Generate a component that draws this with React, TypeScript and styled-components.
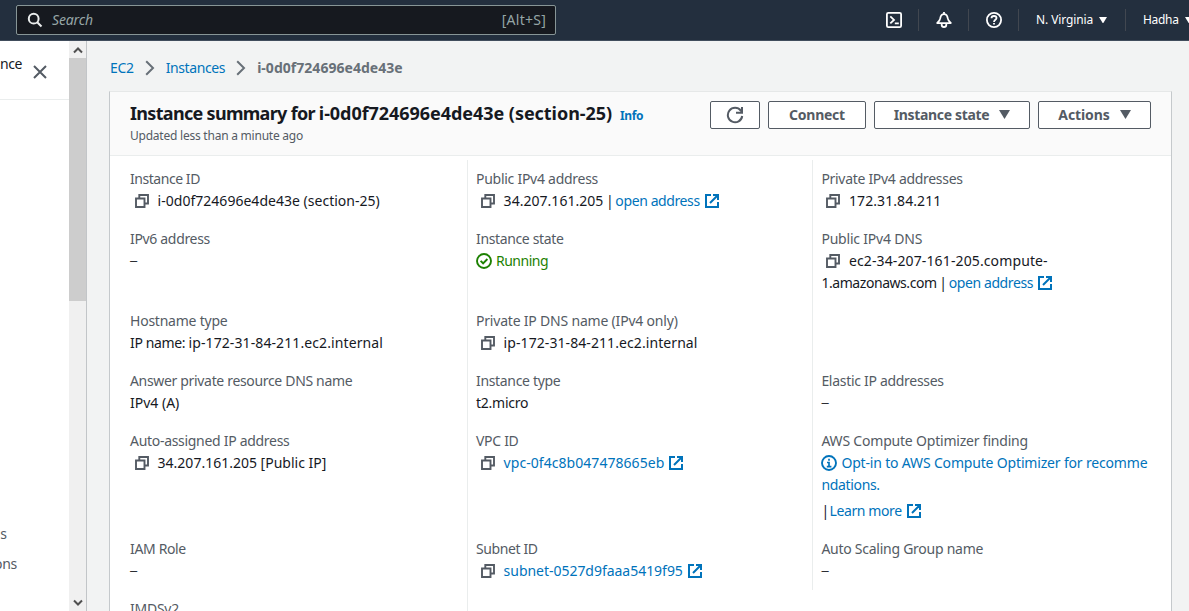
import React from 'react';
import styled, { createGlobalStyle, css } from 'styled-components';

const color = {
  nav: '#232f3e',
  page: '#f2f3f3',
  text: '#16191f',
  label: '#545b64',
  link: '#0073bb',
  green: '#1d8102',
  line: '#eaeded',
};

const GlobalStyle = createGlobalStyle`
  * { box-sizing: border-box; }
  body {
    margin: 0;
    overflow: hidden;
    background: ${color.page};
    color: ${color.text};
    font: 14px/22px "Noto Sans", "Open Sans", sans-serif;
  }
  button { font: inherit; }
`;

const Page = styled.div`
  display: flex;
  flex-direction: column;
  width: 100vw;
  height: 100vh;
  overflow: hidden;
`;

/* Text run with its own tracking */
const Text = styled.span<{ $ls?: number }>`
  letter-spacing: ${(p) => p.$ls ?? 0}px;
  white-space: pre;
`;

/* ---- Top navigation ---- */
const TopNav = styled.header`
  display: flex;
  flex: none;
  height: 41px;
  padding-left: 16px;
  background: ${color.nav};
  border-bottom: 1px solid #414d5c;
`;

const SearchBox = styled.div`
  display: flex;
  flex: none;
  align-items: center;
  width: 540px;
  height: 30px;
  margin-top: 5px;
  padding: 0 9px 0 10px;
  border: 1px solid #879596;
  border-radius: 2px;
  background: #16191f;
  color: #95a5a6;
`;

const SearchHint = styled(Text)`
  flex: 1;
  margin-left: 9px;
  font-style: italic;
`;

const NavGroup = styled.div`
  display: flex;
  flex: none;
  margin-left: 313px;
  padding-top: 9px;
`;

const NavIcon = styled.div`
  display: flex;
  flex: none;
  align-items: center;
  justify-content: center;
  width: 50px;
  height: 22px;
  color: #fff;
  border-right: 1px solid #414750;
`;

const NavMenu = styled.div<{ $width: number; $divider?: boolean }>`
  display: flex;
  flex: none;
  align-items: center;
  gap: 6px;
  width: ${(p) => p.$width}px;
  height: 22px;
  padding-left: 17px;
  color: #fff;
  font-size: 12px;
  ${(p) => p.$divider && css`border-right: 1px solid #414750;`}
`;

/* ---- Body and side panel ---- */
const Body = styled.div`
  display: flex;
  flex: 1;
  min-height: 0;
`;

const Sidebar = styled.aside`
  display: flex;
  flex-direction: column;
  flex: none;
  width: 69px;
  background: #fff;
`;

const SidebarHead = styled.div`
  display: flex;
  flex: none;
  height: 59px;
  padding-top: 12px;
  border-bottom: 1px solid ${color.line};
`;

const SidebarTitle = styled(Text)`
  display: flex;
  justify-content: flex-end;
  width: 22px;
`;

const CloseIcon = styled.svg`
  margin: 12px 0 0 11px;
`;

const SidebarLinks = styled.nav`
  display: flex;
  flex-direction: column;
  gap: 8px;
  margin-top: 423px;
  color: ${color.label};
`;

const SidebarLink = styled(Text)<{ $width: number }>`
  display: flex;
  justify-content: flex-end;
  width: ${(p) => p.$width}px;
`;

const Scrollbar = styled.div`
  display: flex;
  flex-direction: column;
  flex: none;
  width: 18px;
  background: #f0f0f0;
  border-right: 1px solid #c2c5c8;
`;

const ScrollArrow = styled.div`
  display: flex;
  flex: none;
  align-items: center;
  justify-content: center;
  height: 17px;
`;

const ScrollTrack = styled.div`
  flex: 1;
`;

const ScrollThumb = styled.div`
  height: 243px;
  background: #cdcdcd;
`;

/* ---- Main content ---- */
const Main = styled.main`
  display: flex;
  flex-direction: column;
  flex: 1;
  min-width: 0;
  padding: 16px 17px 0 22px;
`;

const Breadcrumbs = styled.nav`
  display: flex;
  align-items: center;
  flex: none;
  height: 22px;
  padding-left: 1px;
  color: ${color.link};
`;

const Chevron = styled.svg`
  margin: 0 11px;
`;

const Current = styled(Text)`
  color: #687078;
  font-weight: 700;
`;

const Card = styled.section`
  flex: 1;
  min-height: 0;
  margin-top: 12px;
  border: 1px solid #c5c9cc;
  border-top-color: #e6e8e8;
  border-bottom: 0;
  background: #fff;
  overflow: hidden;
`;

const CardHead = styled.div`
  display: flex;
  justify-content: space-between;
  height: 64px;
  padding: 9px 20px 0;
  background: #fafafa;
  border-bottom: 1px solid ${color.line};
`;

const TitleRow = styled.div`
  display: flex;
  align-items: baseline;
  gap: 8px;
  height: 24px;
`;

const Title = styled.h1`
  margin: 0;
  font-size: 18px;
  line-height: 24px;
  font-weight: 700;
`;

const Info = styled(Text)`
  color: ${color.link};
  font-size: 12px;
  font-weight: 700;
`;

const Updated = styled.div`
  color: ${color.label};
  font-size: 12px;
  line-height: 22px;
`;

const Buttons = styled.div`
  display: flex;
  gap: 8px;
`;

const Button = styled.button<{ $width: number }>`
  display: flex;
  align-items: center;
  justify-content: center;
  gap: 10px;
  width: ${(p) => p.$width}px;
  height: 28px;
  padding: 0;
  border: 1px solid ${color.label};
  border-radius: 2px;
  background: #fff;
  color: ${color.label};
  font-weight: 700;
`;

const Columns = styled.div`
  display: grid;
  grid-template-columns: 357px 345px 1fr;
  align-items: start;
  padding-top: 4px;
`;

const Column = styled.div<{ $first?: boolean; $pad?: number }>`
  padding: 8px 0 8px ${(p) => (p.$first ? 20 : p.$pad ?? 8)}px;
  ${(p) => !p.$first && css`border-left: 1px solid ${color.line};`}
`;

const Field = styled.div<{ $height: number }>`
  height: ${(p) => p.$height}px;
`;

const Label = styled.div<{ $ls?: number }>`
  color: ${color.label};
  letter-spacing: ${(p) => p.$ls ?? 0}px;
`;

const Line = styled.div<{ $gap?: boolean }>`
  display: flex;
  align-items: center;
  height: 22px;
  white-space: pre;
  ${(p) => p.$gap && css`margin-top: 4px;`}
`;

const Link = styled(Text)`
  color: ${color.link};
`;

const Status = styled(Text)`
  margin-left: 4px;
  color: ${color.green};
`;

const Spaced = styled(Link)`
  margin-left: 4px;
`;

/* Placeholder for an empty value */
const Dash = styled.span`
  font-family: "Liberation Sans", sans-serif;
  font-size: 13px;
`;

const CopySvg = styled.svg`
  flex: none;
  margin: 0 7.600px 0 4px;
`;

const ExternalSvg = styled.svg`
  flex: none;
  margin-left: 4px;
`;

const Copy = () => (
  <CopySvg width="16" height="16" viewBox="0 0 16 16" fill="none" stroke={color.label} strokeWidth="1.900">
    <path d="M2 5.500h8.500V14H2z" />
    <path d="M5.300 5.500V2H14v8.500h-3.500" />
  </CopySvg>
);

const External = () => (
  <ExternalSvg width="16" height="16" viewBox="0 0 16 16" fill="none" stroke={color.link} strokeWidth="2">
    <path d="M7 2H2v12h12V9" />
    <path d="M9 2h5v5M14 2L6 10" />
  </ExternalSvg>
);

const Caret = ({ size }: { size: number }) => (
  <svg width={size} height={size * 0.82} viewBox="0 0 10 8" fill="currentColor" preserveAspectRatio="none">
    <path d="M0 0h10L5 8z" />
  </svg>
);

const TerminalIcon = () => (
  <svg width="16" height="16" viewBox="0 0 16 16" fill="none" stroke="currentColor" strokeWidth="1.800">
    <rect x=".9" y=".9" width="14.200" height="14.200" rx="1.400" />
    <path d="M4.300 4.400L8 7.900l-3.700 3.500M8.800 11.300h4" />
  </svg>
);

const BellIcon = () => (
  <svg width="16" height="16" viewBox="0 0 16 16" fill="none" stroke="currentColor" strokeWidth="1.800" strokeLinejoin="round">
    <path d="M8 0v2M1.200 11.100C3.200 9.700 3.900 8.400 4.300 6.200 4.700 3.500 5.900 2.200 8 2.200s3.300 1.300 3.700 4c.4 2.200 1.100 3.500 3.100 4.900z" />
    <path d="M5.700 11.500v1.200c0 1.300 1 2.300 2.300 2.300s2.300-1 2.300-2.300v-1.200" />
  </svg>
);

const HelpIcon = () => (
  <svg width="16" height="16" viewBox="0 0 16 16" fill="none" stroke="currentColor" strokeWidth="1.800">
    <circle cx="8" cy="8" r="7.100" />
    <path d="M5.500 6.200C5.500 4.800 6.500 4 8 4s2.500.9 2.500 2.100C10.500 7.700 8 7.900 8 9.900M8 10.900v1.600" />
  </svg>
);

const SearchIcon = () => (
  <svg width="16" height="16" viewBox="0 0 16 16" fill="none" stroke="#eaeded" strokeWidth="2">
    <circle cx="6.700" cy="6.700" r="4.900" />
    <path d="M10.200 10.200l4.300 4.300" />
  </svg>
);

const RefreshIcon = () => (
  <svg width="18" height="18" viewBox="0 0 18 18" fill="none" stroke="currentColor" strokeWidth="2">
    <path d="M16.200 10A7.200 7.200 0 1 1 14.800 4.700L16 6" />
    <path d="M16 1v5.800h-6" />
  </svg>
);

const ArrowIcon = ({ down }: { down?: boolean }) => (
  <svg width="10" height="8" viewBox="0 0 10 8" fill="none" stroke="#505050" strokeWidth="2">
    <path d={down ? 'M1 1.500l4 4 4-4' : 'M1 6.500l4-4 4 4'} />
  </svg>
);

const Separator = () => (
  <Chevron width="10" height="16" viewBox="0 0 10 16" fill="none" stroke="#687078" strokeWidth="2">
    <path d="M1.200 1.200L8 8l-6.800 6.800" />
  </Chevron>
);

const CheckIcon = () => (
  <svg width="16" height="16" viewBox="0 0 16 16" fill="none" stroke={color.green} strokeWidth="1.900">
    <circle cx="8" cy="8" r="7" />
    <path d="M4.600 7.900l2.500 2.400 4.300-4.300" />
  </svg>
);

const InfoIcon = () => (
  <svg width="16" height="16" viewBox="0 0 16 16" fill="none" stroke={color.link} strokeWidth="1.900">
    <circle cx="8" cy="8" r="7" />
    <path d="M8 3.800v1.900M6 7.500h2v4M5.800 11.600h4.600" strokeWidth="1.700" />
  </svg>
);

export default function App() {
  return (
    <Page>
      <GlobalStyle />
      <TopNav>
        <SearchBox>
          <SearchIcon />
          <SearchHint $ls={-0.15}>Search</SearchHint>
          <Text $ls={0.25}>[Alt+S]</Text>
        </SearchBox>
        <NavGroup>
          <NavIcon><TerminalIcon /></NavIcon>
          <NavIcon><BellIcon /></NavIcon>
          <NavIcon><HelpIcon /></NavIcon>
          <NavMenu $width={107} $divider>
            <Text $ls={-0.1}>N. Virginia</Text>
            <Caret size={8} />
          </NavMenu>
          <NavMenu $width={80}>
            <Text $ls={-0.3}>Hadha</Text>
            <Caret size={8} />
          </NavMenu>
        </NavGroup>
      </TopNav>

      <Body>
        <Sidebar>
          <SidebarHead>
            <SidebarTitle $ls={-0.4}>nce</SidebarTitle>
            <CloseIcon width="14" height="14" viewBox="0 0 14 14" fill="none" stroke={color.label} strokeWidth="2">
              <path d="M1 1l12 12M13 1L1 13" />
            </CloseIcon>
          </SidebarHead>
          <SidebarLinks>
            <SidebarLink $width={7}>s</SidebarLink>
            <SidebarLink $width={17} $ls={-0.3}>ons</SidebarLink>
          </SidebarLinks>
        </Sidebar>
        <Scrollbar>
          <ScrollArrow><ArrowIcon /></ScrollArrow>
          <ScrollTrack><ScrollThumb /></ScrollTrack>
          <ScrollArrow><ArrowIcon down /></ScrollArrow>
        </Scrollbar>

        <Main>
          <Breadcrumbs>
            <Text $ls={-0.33}>EC2</Text>
            <Separator />
            <Text $ls={-0.39}>Instances</Text>
            <Separator />
            <Current $ls={0.03}>i-0d0f724696e4de43e</Current>
          </Breadcrumbs>

          <Card>
            <CardHead>
              <div>
                <TitleRow>
                  <Title>
                    <Text $ls={-0.69}>Instance summary for </Text>
                    <Text $ls={-0.05}>i-0d0f724696e4de43e (section-25)</Text>
                  </Title>
                  <Info $ls={-0.4}>Info</Info>
                </TitleRow>
                <Updated><Text $ls={-0.23}>Updated less than a minute ago</Text></Updated>
              </div>
              <Buttons>
                <Button $width={50} aria-label="Refresh"><RefreshIcon /></Button>
                <Button $width={98}><Text $ls={-0.25}>Connect</Text></Button>
                <Button $width={156}><Text $ls={-0.33}>Instance state</Text><Caret size={11} /></Button>
                <Button $width={113}><Text $ls={-0.1}>Actions</Text><Caret size={11} /></Button>
              </Buttons>
            </CardHead>

            <Columns>
              <Column $first>
                <Field $height={60}>
                  <Label $ls={-0.45}>Instance ID</Label>
                  <Line><Copy /><Text $ls={0.02}>i-0d0f724696e4de43e (section-25)</Text></Line>
                </Field>
                <Field $height={82}>
                  <Label $ls={-0.33}>IPv6 address</Label>
                  <Line><Dash>–</Dash></Line>
                </Field>
                <Field $height={60}>
                  <Label $ls={-0.23}>Hostname type</Label>
                  <Line><Text $ls={-0.36}>IP name: </Text><Text $ls={0.1}>ip-172-31-84-211.ec2.internal</Text></Line>
                </Field>
                <Field $height={60}>
                  <Label $ls={-0.33}>Answer private resource DNS name</Label>
                  <Line><Text>IPv4 (A)</Text></Line>
                </Field>
                <Field $height={108}>
                  <Label $ls={-0.3}>Auto-assigned IP address</Label>
                  <Line><Copy /><Text>34.207.161.205 [Public IP]</Text></Line>
                </Field>
                <Field $height={60}>
                  <Label $ls={-0.35}>IAM Role</Label>
                  <Line><Dash>–</Dash></Line>
                </Field>
                <Field $height={60}>
                  <Label $ls={-0.25}>IMDSv2</Label>
                </Field>
              </Column>

              <Column>
                <Field $height={60}>
                  <Label $ls={-0.27}>Public IPv4 address</Label>
                  <Line>
                    <Copy /><Text $ls={0.03}>34.207.161.205</Text><Text $ls={-1}> | </Text>
                    <Link $ls={-0.4}>open address</Link><External />
                  </Line>
                </Field>
                <Field $height={82}>
                  <Label $ls={-0.36}>Instance state</Label>
                  <Line><CheckIcon /><Status $ls={-0.5}>Running</Status></Line>
                </Field>
                <Field $height={60}>
                  <Label $ls={-0.2}>Private IP DNS name (IPv4 only)</Label>
                  <Line><Copy /><Text $ls={0.08}>ip-172-31-84-211.ec2.internal</Text></Line>
                </Field>
                <Field $height={60}>
                  <Label $ls={-0.33}>Instance type</Label>
                  <Line><Text $ls={-0.25}>t2.micro</Text></Line>
                </Field>
                <Field $height={108}>
                  <Label $ls={-0.3}>VPC ID</Label>
                  <Line><Copy /><Link $ls={0.05}>vpc-0f4c8b047478665eb</Link><External /></Line>
                </Field>
                <Field $height={60}>
                  <Label $ls={-0.4}>Subnet ID</Label>
                  <Line><Copy /><Link $ls={-0.03}>subnet-0527d9faaa5419f95</Link><External /></Line>
                </Field>
                <Field $height={60} />
              </Column>

              <Column $pad={8.400}>
                <Field $height={60}>
                  <Label $ls={-0.3}>Private IPv4 addresses</Label>
                  <Line><Copy /><Text $ls={0.08}>172.31.84.211</Text></Line>
                </Field>
                <Field $height={142}>
                  <Label $ls={-0.2}>Public IPv4 DNS</Label>
                  <Line><Copy /><Text $ls={0.12}>ec2-34-207-161-205.compute-</Text></Line>
                  <Line>
                    <Text $ls={-0.44}>1.amazonaws.com</Text><Text $ls={-1}> | </Text>
                    <Link $ls={-0.4}>open address</Link><External />
                  </Line>
                </Field>
                <Field $height={60}>
                  <Label $ls={-0.3}>Elastic IP addresses</Label>
                  <Line><Dash>–</Dash></Line>
                </Field>
                <Field $height={108}>
                  <Label $ls={-0.2}>AWS Compute Optimizer finding</Label>
                  <Line><InfoIcon /><Spaced $ls={-0.17}>Opt-in to AWS Compute Optimizer for recomme</Spaced></Line>
                  <Line><Link $ls={-0.33}>ndations.</Link></Line>
                  <Line $gap>
                    <Text $ls={-1.6}>| </Text><Link $ls={-0.4}>Learn more</Link><External />
                  </Line>
                </Field>
                <Field $height={44}>
                  <Label $ls={-0.26}>Auto Scaling Group name</Label>
                  <Line><Dash>–</Dash></Line>
                </Field>
              </Column>
            </Columns>
          </Card>
        </Main>
      </Body>
    </Page>
  );
}
